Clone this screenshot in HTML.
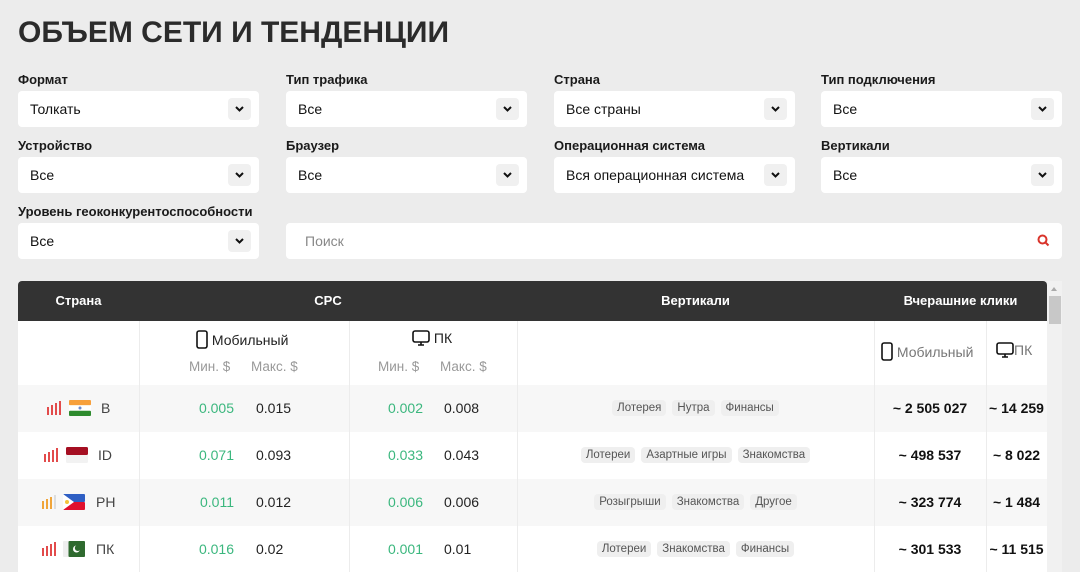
<!DOCTYPE html>
<html><head><meta charset="utf-8"><style>
*{box-sizing:border-box;margin:0;padding:0}
body{width:1080px;height:572px;overflow:hidden;background:#ececec;font-family:"Liberation Sans",sans-serif;color:#111;position:relative}
.a{position:absolute}
h1{position:absolute;left:18px;top:16px;font-size:30px;font-weight:bold;letter-spacing:0;color:#2b2b2b}
.lbl{position:absolute;font-size:13px;font-weight:bold;color:#1a1a1a}
.sel{position:absolute;width:241px;height:36px;background:#fff;border-radius:4px;font-size:14px;padding:10px 12px;color:#111}
.sel .ch{position:absolute;right:8px;top:7px;width:23px;height:22px;background:#f0f0f0;border-radius:4px}
.sel .ch svg{position:absolute;left:6px;top:6px}
.hd{position:absolute;top:281px;height:40px;background:#333;color:#fff;font-weight:bold;font-size:13px;line-height:40px;text-align:center}
.row{position:absolute;left:18px;width:1029px;height:47px}
.vl{position:absolute;width:1px;background:#ececec}
.g{position:absolute;color:#3bb77e;font-size:14px;text-align:right}
.n{position:absolute;color:#222;font-size:14px}
.tags{position:absolute;left:517px;width:357px;text-align:center;font-size:11.5px;color:#555}
.tags span{display:inline-block;background:#efefef;border-radius:4px;padding:2px 5px;margin:0 3px}
.ck{position:absolute;font-weight:bold;font-size:14px;text-align:center;color:#111}
.sub{position:absolute;color:#999;font-size:13.5px}
.code{position:absolute;left:101px;font-size:14px;color:#444}
</style></head><body>
<h1>ОБЪЕМ СЕТИ И ТЕНДЕНЦИИ</h1>

<div class="lbl" style="left:18px;top:72px">Формат</div>
<div class="lbl" style="left:286px;top:72px">Тип трафика</div>
<div class="lbl" style="left:554px;top:72px">Страна</div>
<div class="lbl" style="left:821px;top:72px">Тип подключения</div>
<div class="lbl" style="left:18px;top:138px">Устройство</div>
<div class="lbl" style="left:286px;top:138px">Браузер</div>
<div class="lbl" style="left:554px;top:138px">Операционная система</div>
<div class="lbl" style="left:821px;top:138px">Вертикали</div>
<div class="lbl" style="left:18px;top:204px">Уровень геоконкурентоспособности</div>

<div class="sel" style="left:18px;top:91px">Толкать<div class="ch"><svg width="11" height="10"><path d="M2 3l3.5 3.5L9 3" stroke="#111" stroke-width="2" fill="none"/></svg></div></div>
<div class="sel" style="left:286px;top:91px">Все<div class="ch"><svg width="11" height="10"><path d="M2 3l3.5 3.5L9 3" stroke="#111" stroke-width="2" fill="none"/></svg></div></div>
<div class="sel" style="left:554px;top:91px">Все страны<div class="ch"><svg width="11" height="10"><path d="M2 3l3.5 3.5L9 3" stroke="#111" stroke-width="2" fill="none"/></svg></div></div>
<div class="sel" style="left:821px;top:91px">Все<div class="ch"><svg width="11" height="10"><path d="M2 3l3.5 3.5L9 3" stroke="#111" stroke-width="2" fill="none"/></svg></div></div>
<div class="sel" style="left:18px;top:157px">Все<div class="ch"><svg width="11" height="10"><path d="M2 3l3.5 3.5L9 3" stroke="#111" stroke-width="2" fill="none"/></svg></div></div>
<div class="sel" style="left:286px;top:157px">Все<div class="ch"><svg width="11" height="10"><path d="M2 3l3.5 3.5L9 3" stroke="#111" stroke-width="2" fill="none"/></svg></div></div>
<div class="sel" style="left:554px;top:157px">Вся операционная система<div class="ch"><svg width="11" height="10"><path d="M2 3l3.5 3.5L9 3" stroke="#111" stroke-width="2" fill="none"/></svg></div></div>
<div class="sel" style="left:821px;top:157px">Все<div class="ch"><svg width="11" height="10"><path d="M2 3l3.5 3.5L9 3" stroke="#111" stroke-width="2" fill="none"/></svg></div></div>
<div class="sel" style="left:18px;top:223px">Все<div class="ch"><svg width="11" height="10"><path d="M2 3l3.5 3.5L9 3" stroke="#111" stroke-width="2" fill="none"/></svg></div></div>
<div class="sel" style="left:286px;top:223px;width:776px;color:#888;padding-left:19px">Поиск<svg class="a" style="right:12px;top:11px" width="13" height="13"><circle cx="5.5" cy="5.5" r="4" stroke="#d9342b" stroke-width="2" fill="none"/><path d="M8.5 8.5l3 3" stroke="#d9342b" stroke-width="2"/></svg></div>

<div class="a" style="left:18px;top:281px;width:1029px;height:291px;background:#fff;border-radius:4px 4px 0 0;overflow:hidden"></div>
<div class="hd" style="left:18px;width:121px;border-radius:4px 0 0 0">Страна</div>
<div class="hd" style="left:139px;width:378px">CPC</div>
<div class="hd" style="left:517px;width:357px">Вертикали</div>
<div class="hd" style="left:874px;width:173px;border-radius:0 4px 0 0">Вчерашние клики</div>

<div class="row" style="top:385px;background:#f7f7f7"></div>
<div class="row" style="top:479px;background:#f7f7f7"></div>

<div class="vl" style="left:139px;top:321px;height:251px"></div>
<div class="vl" style="left:349px;top:321px;height:251px"></div>
<div class="vl" style="left:517px;top:321px;height:251px"></div>
<div class="vl" style="left:874px;top:321px;height:251px"></div>
<div class="vl" style="left:986px;top:321px;height:251px"></div>

<div class="a" style="left:196px;top:330px;font-size:14px;color:#222"><svg style="vertical-align:-4px" width="12" height="19"><rect x="1" y="1" width="10" height="17" rx="2" stroke="#111" stroke-width="1.6" fill="none"/></svg> Мобильный</div>
<div class="a" style="left:412px;top:330px;font-size:14px;color:#222"><svg style="vertical-align:-3px" width="18" height="16"><rect x="1" y="1" width="16" height="11" rx="2" stroke="#111" stroke-width="1.6" fill="none"/><path d="M9 12v3M6 15h6" stroke="#111" stroke-width="1.6"/></svg> ПК</div>
<div class="sub" style="left:189px;top:359px">Мин. $</div>
<div class="sub" style="left:251px;top:359px">Макс. $</div>
<div class="sub" style="left:378px;top:359px">Мин. $</div>
<div class="sub" style="left:440px;top:359px">Макс. $</div>
<div class="a" style="left:881px;top:342px;font-size:14px;color:#777"><svg style="vertical-align:-4px" width="12" height="19"><rect x="1" y="1" width="10" height="17" rx="2" stroke="#111" stroke-width="1.6" fill="none"/></svg> Мобильный</div>
<div class="a" style="left:996px;top:342px;font-size:14px;color:#777"><svg style="vertical-align:-3px" width="18" height="16"><rect x="1" y="1" width="16" height="11" rx="2" stroke="#111" stroke-width="1.6" fill="none"/><path d="M9 12v3M6 15h6" stroke="#111" stroke-width="1.6"/></svg>ПК</div>

<svg class="a" style="left:47px;top:401px" width="14" height="14"><g fill="#e24b4b"><rect x="0" y="6" width="2" height="8"/><rect x="4" y="4" width="2" height="10"/><rect x="8" y="2" width="2" height="12"/><rect x="12" y="0" width="2" height="14"/></g></svg>
<svg class="a" style="left:69px;top:400px" width="22" height="16"><rect width="22" height="5.3" fill="#f7a03c" rx="1"/><rect y="5.3" width="22" height="5.4" fill="#fff"/><rect y="10.7" width="22" height="5.3" fill="#2e8b2e" rx="1"/><circle cx="11" cy="8" r="1.5" fill="#6a8ad0"/></svg>
<div class="code" style="top:400px">B</div>
<div class="g" style="left:160px;width:74px;top:400px">0.005</div><div class="n" style="left:256px;top:400px">0.015</div>
<div class="g" style="left:349px;width:74px;top:400px">0.002</div><div class="n" style="left:444px;top:400px">0.008</div>
<div class="tags" style="top:400px"><span>Лотерея</span><span>Нутра</span><span>Финансы</span></div>
<div class="ck" style="left:874px;width:112px;top:400px">~ 2 505 027</div><div class="ck" style="left:986px;width:61px;top:400px">~ 14 259</div>

<svg class="a" style="left:44px;top:448px" width="14" height="14"><g fill="#e24b4b"><rect x="0" y="6" width="2" height="8"/><rect x="4" y="4" width="2" height="10"/><rect x="8" y="2" width="2" height="12"/><rect x="12" y="0" width="2" height="14"/></g></svg>
<svg class="a" style="left:66px;top:447px" width="22" height="16"><rect width="22" height="16" rx="1.5" fill="#f2f2f2"/><rect width="22" height="8" rx="1.5" fill="#a50f22"/></svg>
<div class="code" style="left:98px;top:447px">ID</div>
<div class="g" style="left:160px;width:74px;top:447px">0.071</div><div class="n" style="left:256px;top:447px">0.093</div>
<div class="g" style="left:349px;width:74px;top:447px">0.033</div><div class="n" style="left:444px;top:447px">0.043</div>
<div class="tags" style="top:447px"><span>Лотереи</span><span>Азартные игры</span><span>Знакомства</span></div>
<div class="ck" style="left:874px;width:112px;top:447px">~ 498 537</div><div class="ck" style="left:986px;width:61px;top:447px">~ 8 022</div>

<svg class="a" style="left:42px;top:495px" width="14" height="14"><g fill="#f0a53a"><rect x="0" y="6" width="2" height="8"/><rect x="4" y="4" width="2" height="10"/><rect x="8" y="2" width="2" height="12"/></g><rect x="12" y="0" width="2" height="14" fill="#ddd"/></svg>
<svg class="a" style="left:63px;top:494px" width="22" height="16"><rect width="22" height="8" fill="#2f5fc4" rx="1"/><rect y="8" width="22" height="8" fill="#e0102e" rx="1"/><path d="M0 0L11 8L0 16Z" fill="#fff"/><circle cx="4" cy="8" r="2" fill="#f4c43a"/></svg>
<div class="code" style="left:96px;top:494px">PH</div>
<div class="g" style="left:160px;width:74px;top:494px">0.011</div><div class="n" style="left:256px;top:494px">0.012</div>
<div class="g" style="left:349px;width:74px;top:494px">0.006</div><div class="n" style="left:444px;top:494px">0.006</div>
<div class="tags" style="top:494px"><span>Розыгрыши</span><span>Знакомства</span><span>Другое</span></div>
<div class="ck" style="left:874px;width:112px;top:494px">~ 323 774</div><div class="ck" style="left:986px;width:61px;top:494px">~ 1 484</div>

<svg class="a" style="left:42px;top:542px" width="14" height="14"><g fill="#e24b4b"><rect x="0" y="6" width="2" height="8"/><rect x="4" y="4" width="2" height="10"/><rect x="8" y="2" width="2" height="12"/><rect x="12" y="0" width="2" height="14"/></g></svg>
<svg class="a" style="left:63px;top:541px" width="22" height="16"><rect width="22" height="16" fill="#eee" rx="1"/><rect x="5.5" width="16.5" height="16" fill="#2f6a2f" rx="1"/><circle cx="13.5" cy="8" r="3.5" fill="#fff"/><circle cx="14.8" cy="7" r="3" fill="#2f6a2f"/></svg>
<div class="code" style="left:96px;top:541px">ПК</div>
<div class="g" style="left:160px;width:74px;top:541px">0.016</div><div class="n" style="left:256px;top:541px">0.02</div>
<div class="g" style="left:349px;width:74px;top:541px">0.001</div><div class="n" style="left:444px;top:541px">0.01</div>
<div class="tags" style="top:541px"><span>Лотереи</span><span>Знакомства</span><span>Финансы</span></div>
<div class="ck" style="left:874px;width:112px;top:541px">~ 301 533</div><div class="ck" style="left:986px;width:61px;top:541px">~ 11 515</div>

<div class="a" style="left:1047px;top:281px;width:15px;height:291px;background:#f1f1f1"></div>
<div class="a" style="left:1051px;top:287px;width:0;height:0;border-left:3px solid transparent;border-right:3px solid transparent;border-bottom:4px solid #aaa"></div>
<div class="a" style="left:1049px;top:296px;width:12px;height:28px;background:#c8c8c8"></div>
</body></html>
